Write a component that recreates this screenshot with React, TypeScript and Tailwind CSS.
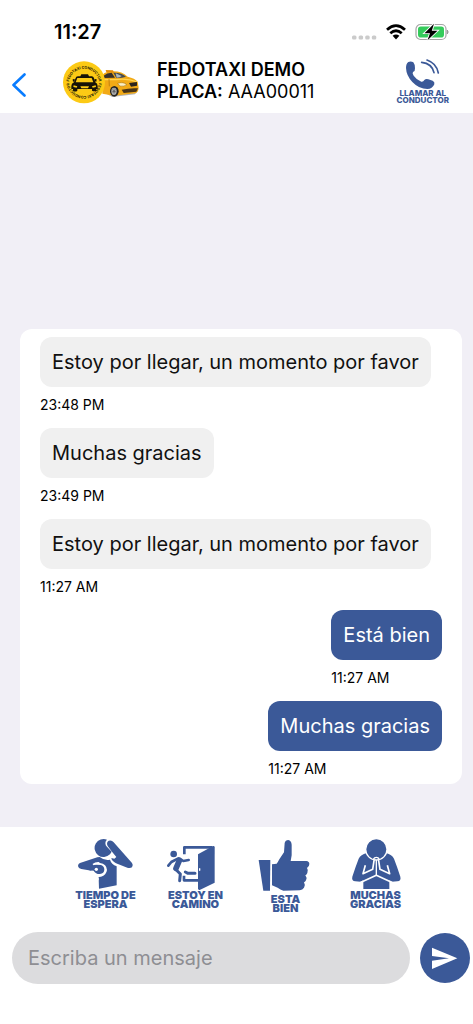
import React, { useState } from "react";

interface Message {
  id: number;
  text: string;
  time: string;
  mine: boolean;
}

interface QuickReply {
  lines: [string, string];
  message: string;
  icon: React.ReactNode;
}

const MESSAGES: Message[] = [
  { id: 1, text: "Estoy por llegar, un momento por favor", time: "23:48 PM", mine: false },
  { id: 2, text: "Muchas gracias", time: "23:49 PM", mine: false },
  { id: 3, text: "Estoy por llegar, un momento por favor", time: "11:27 AM", mine: false },
  { id: 4, text: "Está bien", time: "11:27 AM", mine: true },
  { id: 5, text: "Muchas gracias", time: "11:27 AM", mine: true },
];

const WaitIcon = () => (
  <svg viewBox="39 36 198 162" className="h-[54px] w-[66px]" fill="currentColor" aria-hidden="true">
    <path d="M141 44 A27 27 0 1 0 150 88 L155 80 L138 62 Q133 50 141 44Z" />
    <path d="M146 47 Q155 44 161 52 L216 114 Q221 121 216 127 Q210 131 202 128 L168 115 Q155 108 154 99 L163 101 L169 96 L156 80 L143 63 Q138 53 146 47Z" />
    <path d="M112 97 L60 114 Q52 118 55 126 Q57 131 64 132 L95 137 L108 157 L116 160 L117 191 L170 181 V124 Q154 118 150 104 Q132 107 119 96Z" />
    <path d="M99 120 Q108 112 120 114 Q140 117 141 135 Q139 151 123 155 L116 156 V166 H94 V136Z" fill="#fff" />
    <path d="M90 120 Q110 118 123 120 Q133 124 133 134 Q132 145 120 147 Q108 148 101 137 L88 136Z" />
    <path d="M99 119 Q107 113 118 114" fill="none" stroke="#fff" strokeWidth="5" />
    <circle cx="109" cy="133" r="5" fill="#fff" />
  </svg>
);

const DoorIcon = () => (
  <svg viewBox="24 36 198 162" className="h-[54px] w-[66px]" aria-hidden="true">
    <g fill="none" stroke="currentColor" strokeLinecap="round" strokeLinejoin="round">
      <path d="M88 88 V67 H172" strokeWidth="8" strokeLinecap="butt" />
      <path d="M87 152 V166 H134" strokeWidth="8" strokeLinecap="butt" />
      <path d="M70 100 L49 111 L40 122" strokeWidth="8" />
      <path d="M74 101 L85 108 L101 105" strokeWidth="8" />
      <path d="M73 107 L63 130" strokeWidth="17" />
      <path d="M61 132 L76 147 L74 167" strokeWidth="9" />
      <path d="M91 141 L99 145 H120" strokeWidth="9" />
    </g>
    <circle cx="56" cy="87" r="10" fill="currentColor" />
    <path d="M129 88 L174 63 Q179 62 179 67 V173 L134 195 Q129 196 129 190Z" fill="currentColor" />
    <rect x="132" y="129" width="4" height="9" rx="2" fill="#fff" />
  </svg>
);

const ThumbIcon = () => (
  <svg viewBox="24 36 198 174" className="h-[58px] w-[66px]" fill="currentColor" aria-hidden="true">
    <path d="M41 105 L76 105 L75 197 L55 197Z" />
    <path d="M81 118 L95 116 Q99 111 103 103 L117 82 L119 54 Q121 45 130 45 Q139 47 140 59 L140 91 L137 108 L184 108 Q193 109 193 117 Q193 125 186 129 Q191 136 187 144 Q185 149 181 151 Q187 158 183 166 Q181 170 177 172 Q182 180 177 188 Q173 195 164 196 L115 197 Q106 194 98 188 L81 181Z" />
  </svg>
);

const PrayIcon = () => (
  <svg viewBox="24 36 198 162" className="h-[54px] w-[66px]" fill="currentColor" aria-hidden="true">
    <path d="M95 84 Q77 89 71 101 Q62 124 52 155 Q49 168 61 169 L77 170 L85 166 V192 H163 V166 L171 170 L187 169 Q199 168 196 155 Q186 124 177 101 Q171 89 153 84Z" />
    <g fill="none" stroke="#fff" strokeLinejoin="round">
      <path d="M91 121 L84 146 L113 133 L118 101" strokeWidth="5" />
      <path d="M157 121 L164 146 L135 133 L130 101" strokeWidth="5" />
      <path d="M124 98 V150" strokeWidth="4" />
      <path d="M75 173 L124 151 L173 173" strokeWidth="5" />
    </g>
    <circle cx="124" cy="73" r="32" stroke="#fff" strokeWidth="4" />
    <path d="M115 103 Q118 97 124 97 Q130 97 133 103" fill="none" stroke="#fff" strokeWidth="4" />
  </svg>
);

const PhoneIcon = () => (
  <svg viewBox="498 171 111 96" className="h-8 w-[37px]" aria-hidden="true">
    <path
      d="M511 183 Q519 179 526 184 Q531 190 531 202 Q532 210 525 213 Q522 217 527 224 Q536 237 550 242 Q556 243 559 237 Q563 233 571 235 L584 239 Q591 243 589 250 Q583 264 568 264 Q543 264 523 243 Q505 224 504 201 Q504 188 511 183Z"
      fill="currentColor"
    />
    <g fill="none" stroke="currentColor" strokeWidth="5" strokeLinecap="round">
      <path d="M551 184 Q582 187 588 215" />
      <path d="M567 177 Q596 187 601 216" />
    </g>
  </svg>
);

const TaxiLogo = () => (
  <svg viewBox="24 18 228 135" className="h-[45px] w-[76px] shrink-0" role="img" aria-label="Fedotaxi">
    <defs>
      <path id="logo-top" d="M42 92 A45 45 0 0 1 132 92" />
      <path id="logo-bottom" d="M132 84 A45 45 0 0 1 42 84" />
    </defs>
    <path d="M146 118 L172 132 L240 124 L250 112 L200 112Z" fill="#b5b5b5" />
    <path d="M142 66 Q152 55 172 55 Q200 54 218 71 Q240 76 248 86 L251 104 Q250 118 240 121 L178 128 L142 122Z" fill="#f2aa16" />
    <path d="M152 51 L174 52 L177 59 L154 58Z" fill="#e58f09" />
    <path d="M146 68 Q156 59 170 59 L180 74 L148 75Z" fill="#37312a" />
    <path d="M175 59 Q199 58 213 71 Q199 76 184 75Z" fill="#454b50" />
    <path d="M182 61 L200 69 L194 73 L185 74Z" fill="#aeb8bd" />
    <path d="M145 80 L183 80 Q216 75 247 87" fill="none" stroke="#ffd454" strokeWidth="4" />
    <path d="M222 90 L246 87 L246 98 L228 101Z" fill="#2c251d" />
    <path d="M188 91 Q206 86 215 95 Q206 101 195 99Z" fill="#fff1c0" stroke="#684714" strokeWidth="1" />
    <path d="M200 110 Q226 104 249 106 L244 116 L206 120Z" fill="#493518" />
    <path d="M162 78 L163 100" stroke="#ac6d0b" strokeWidth="2" />
    <ellipse cx="178" cy="115" rx="13" ry="16" fill="#242424" />
    <ellipse cx="177" cy="115" rx="8" ry="11" fill="#c4c4c4" />
    <path d="M177 105 V125 M170 115 H184 M172 109 L182 121 M182 109 L172 121" stroke="#555" strokeWidth="2" />
    <circle cx="87" cy="88" r="63" fill="#fcca15" />
    <g fill="#171307">
      <path d="M79 64 H99 L102 70 H111 Q116 71 118 78 L121 88 Q128 92 128 99 V108 H49 V99 Q49 92 57 88 L61 77 Q63 70 69 70 H76Z" />
      <path d="M54 106 H67 V113 Q61 118 54 113Z M111 106 H124 V113 Q118 117 111 113Z" />
      <path d="M53 79 L59 78 V85 L54 86Z M119 78 L125 79 L124 86 L119 85Z" />
    </g>
    <path d="M67 75 H110 L115 88 H62Z M56 97 L67 100 L65 104 L55 102Z M122 97 L111 100 L113 104 L123 102Z M76 100 H102 L99 106 H79Z" fill="#fcca15" />
    <g fill="#171307" className="font-['Inter',sans-serif] text-[11px] font-bold">
      <text textAnchor="middle">
        <textPath href="#logo-top" startOffset="50%">FEDOTAXI CONDUCTOR</textPath>
      </text>
      <text textAnchor="middle">
        <textPath href="#logo-bottom" startOffset="50%">FEDOTAXI CONDUCTOR</textPath>
      </text>
    </g>
  </svg>
);

const StatusBar = () => (
  <div className="flex h-14 items-center justify-between pt-2 pr-6 pl-[54px]">
    <span className="text-xl font-semibold">11:27</span>
    <div className="flex items-center gap-[9px]">
      <svg viewBox="0 0 25 16" className="h-4 w-[25px]" fill="#cbcbcb" aria-hidden="true">
        <rect x="0" y="11.5" width="4.5" height="4" rx="1.5" />
        <rect x="6.6" y="11.5" width="4.5" height="4" rx="1.5" />
        <rect x="13.2" y="11.5" width="4.5" height="4" rx="1.5" />
        <rect x="19.8" y="11.5" width="4.5" height="4" rx="1.5" />
      </svg>
      <svg viewBox="0 0 20 16" className="h-4 w-5" aria-hidden="true">
        <g fill="none" stroke="#000" strokeWidth="2.8">
          <path d="M1 5.7 Q10 -2.4 19 5.7" />
          <path d="M4.3 9.2 Q10 4.3 15.7 9.2" />
        </g>
        <path d="M6.6 11.8 Q10 9 13.4 11.8 L10 15.4Z" />
      </svg>
      <svg viewBox="0 0 34 18" className="h-[18px] w-[34px]" aria-hidden="true">
        <rect x="1" y="1.5" width="30" height="15" rx="4.5" fill="#fff" stroke="#a5a5a5" strokeWidth="1.2" />
        <rect x="3" y="3.5" width="26" height="11" rx="2.8" fill="#35cb5b" />
        <path d="M32.3 7 Q34 9 32.3 11Z" fill="#999" stroke="#999" />
        <path d="M19 .8 L9.5 10.2 H15 L12.5 17.2 L22.5 7.7 H16.8Z" stroke="#fff" strokeWidth="1.8" paintOrder="stroke" />
      </svg>
    </div>
  </div>
);

const QUICK_REPLIES: QuickReply[] = [
  { lines: ["TIEMPO DE", "ESPERA"], message: "Tiempo de espera", icon: <WaitIcon /> },
  { lines: ["ESTOY EN", "CAMINO"], message: "Estoy en camino", icon: <DoorIcon /> },
  { lines: ["ESTA", "BIEN"], message: "Está bien", icon: <ThumbIcon /> },
  { lines: ["MUCHAS", "GRACIAS"], message: "Muchas gracias", icon: <PrayIcon /> },
];

const MessageBubble: React.FC<{ message: Message }> = ({ message }) => (
  <li className={message.mine ? "self-end" : "self-start"}>
    <p
      className={`rounded-xl px-3 py-[11px] text-xl leading-7 ${
        message.mine ? "bg-[#3b5998] text-white" : "bg-[#f0f0f0] text-[#111]"
      }`}
    >
      {message.text}
    </p>
    <time className="mt-2 block text-sm leading-5">{message.time}</time>
  </li>
);

export default function App() {
  const [messages, setMessages] = useState<Message[]>(MESSAGES);
  const [draft, setDraft] = useState("");

  const sendMessage = (text: string) => {
    if (!text.trim()) return;
    setMessages((prev) => [
      ...prev,
      { id: prev.length + 1, text, time: "11:27 AM", mine: true },
    ]);
    setDraft("");
  };

  return (
    <div className="flex min-h-screen flex-col bg-[#f1eff6] font-['Inter',sans-serif] text-black">
      <header className="bg-white">
        <StatusBar />
        <div className="flex items-center pt-0.5 pr-6 pb-[9px]">
          <button type="button" aria-label="Volver" className="w-[63px] shrink-0 pt-2 pl-3">
            <svg viewBox="0 0 14 24" className="h-6 w-3.5" fill="none" stroke="#087cff" strokeWidth="2.6" strokeLinecap="round" strokeLinejoin="round" aria-hidden="true">
              <path d="M12.5 1.5 L1.5 12 L12.5 22.5" />
            </svg>
          </button>
          <TaxiLogo />
          <div className="ml-[18px] flex-1 text-lg leading-[22px]">
            <h1 className="font-semibold">FEDOTAXI DEMO</h1>
            <p>
              <span className="font-semibold">PLACA:</span> AAA00011
            </p>
          </div>
          <button type="button" className="flex flex-col items-center text-[#3b5998]">
            <PhoneIcon />
            <span className="text-[8px] leading-[7px] font-extrabold">
              LLAMAR AL
              <br />
              CONDUCTOR
            </span>
          </button>
        </div>
      </header>

      <main className="flex flex-1 flex-col justify-end pr-[11px] pb-[43px] pl-5">
        <ul className="flex flex-col gap-[13px] rounded-xl bg-white px-5 pt-2 pb-[5px]">
          {messages.map((m) => (
            <MessageBubble key={m.id} message={m} />
          ))}
        </ul>
      </main>

      <footer className="bg-white pt-2.5 pb-10">
        {/* Quick replies */}
        <div className="flex items-start justify-center pl-2">
          {QUICK_REPLIES.map((q) => (
            <button
              key={q.message}
              type="button"
              onClick={() => sendMessage(q.message)}
              className="flex w-[90px] flex-col items-center text-[#3b5998]"
            >
              {q.icon}
              <span className="text-[11px] leading-[9px] font-black">
                {q.lines[0]}
                <br />
                {q.lines[1]}
              </span>
            </button>
          ))}
        </div>

        <form
          className="mt-[19px] flex items-center gap-2.5 pr-[3px] pl-3"
          onSubmit={(e) => {
            e.preventDefault();
            sendMessage(draft);
          }}
        >
          <input
            type="text"
            aria-label="Escriba un mensaje"
            placeholder="Escriba un mensaje"
            value={draft}
            onChange={(e) => setDraft(e.target.value)}
            className="h-[52px] min-w-0 flex-1 rounded-full bg-[#dcdcde] px-4 text-xl outline-none placeholder:text-[#8e8e93]"
          />
          <button type="submit" aria-label="Enviar" className="flex size-[50px] shrink-0 items-center justify-center rounded-full bg-[#3b5998]">
            <svg viewBox="240 39 150 150" className="size-[50px]" fill="#fff" aria-hidden="true">
              <path d="M276 83 L352 115 L276 147 V122 L327 115 L276 108Z" />
            </svg>
          </button>
        </form>
      </footer>
    </div>
  );
}
